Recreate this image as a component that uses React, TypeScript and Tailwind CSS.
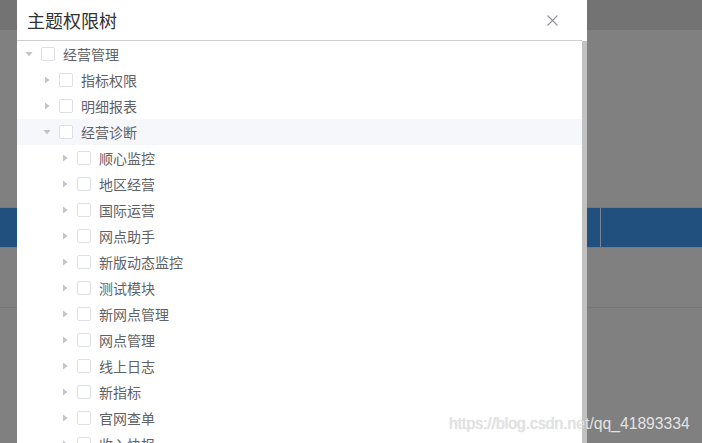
import React from "react";

type Node = { label: string; level: number; expanded?: boolean; hover?: boolean };

const nodes: Node[] = [
  { label: "经营管理", level: 0, expanded: true },
  { label: "指标权限", level: 1 },
  { label: "明细报表", level: 1 },
  { label: "经营诊断", level: 1, expanded: true, hover: true },
  { label: "顺心监控", level: 2 },
  { label: "地区经营", level: 2 },
  { label: "国际运营", level: 2 },
  { label: "网点助手", level: 2 },
  { label: "新版动态监控", level: 2 },
  { label: "测试模块", level: 2 },
  { label: "新网点管理", level: 2 },
  { label: "网点管理", level: 2 },
  { label: "线上日志", level: 2 },
  { label: "新指标", level: 2 },
  { label: "官网查单", level: 2 },
  { label: "收入快报", level: 2 },
];

const padClass = ["pl-0", "pl-[18px]", "pl-[36px]"];

function Caret({ expanded }: { expanded?: boolean }) {
  return (
    <span className="w-[24px] h-[24px] flex items-center justify-center">
      <svg
        width="8"
        height="8"
        viewBox="0 0 8 8"
        className={expanded ? "rotate-90" : ""}
      >
        <path d="M2 0.5 L6.5 4 L2 7.5 Z" fill="#c0c4cc" />
      </svg>
    </span>
  );
}

export default function App() {
  return (
    <div
      className="relative w-[702px] h-[443px] overflow-hidden bg-[#808080]"
      style={{ fontFamily: '"Noto Sans CJK SC", "Noto Sans", sans-serif' }}
    >
      {/* background page (dimmed) */}
      <div className="flex flex-col w-full">
        <div className="h-[30px] bg-[#737373]" />
        <div className="h-[177px]" />
        <div className="h-[41px] flex border-t border-b border-[#6f7b88] bg-[#21507f]">
          <div className="w-[600px]" />
          <div className="w-px bg-[#7a8494]" />
          <div className="flex-1" />
        </div>
        <div className="h-[59px]" />
        <div className="h-px bg-[#767676]" />
      </div>

      {/* dialog */}
      <div className="absolute left-[17px] top-0 w-[570px] h-[443px] bg-white flex flex-col">
        <div className="h-[41px] flex items-center justify-between pl-[10px] pr-[24px] border-b border-[#cfcfcf] shrink-0 mr-[5px]">
          <span className="text-[18px] text-[#303133] leading-none">主题权限树</span>
          <svg width="11" height="11" viewBox="0 0 11 11">
            <path d="M0.5 0.5 L10.5 10.5 M10.5 0.5 L0.5 10.5" stroke="#909399" strokeWidth="1.1" />
          </svg>
        </div>
        <div className="flex flex-1 min-h-0">
          <div className="flex-1 flex flex-col">
            {nodes.map((n, i) => (
              <div
                key={i}
                className={`h-[26px] shrink-0 flex items-center ${padClass[n.level]} ${
                  n.hover ? "bg-[#f5f7fa]" : ""
                }`}
              >
                <Caret expanded={n.expanded} />
                <span className="w-[14px] h-[14px] border border-[#dcdfe6] rounded-[2px] bg-white mr-[8px] shrink-0" />
                <span className="text-[14px] text-[#606266] leading-none">{n.label}</span>
              </div>
            ))}
          </div>
          <div className="w-[5px] bg-[#c1c1c1]" />
        </div>
      </div>

      {/* watermark */}
      <div
        className="absolute left-[449px] top-[414px] text-[15.7px] text-[#e3e3e3] leading-[20px] whitespace-nowrap"
        style={{
          fontFamily: '"Liberation Sans", Arial, sans-serif',
          textShadow: "0 0 1px rgba(120,120,120,0.35)",
        }}
      >
        https://blog.csdn.net/qq_41893334
      </div>
    </div>
  );
}
